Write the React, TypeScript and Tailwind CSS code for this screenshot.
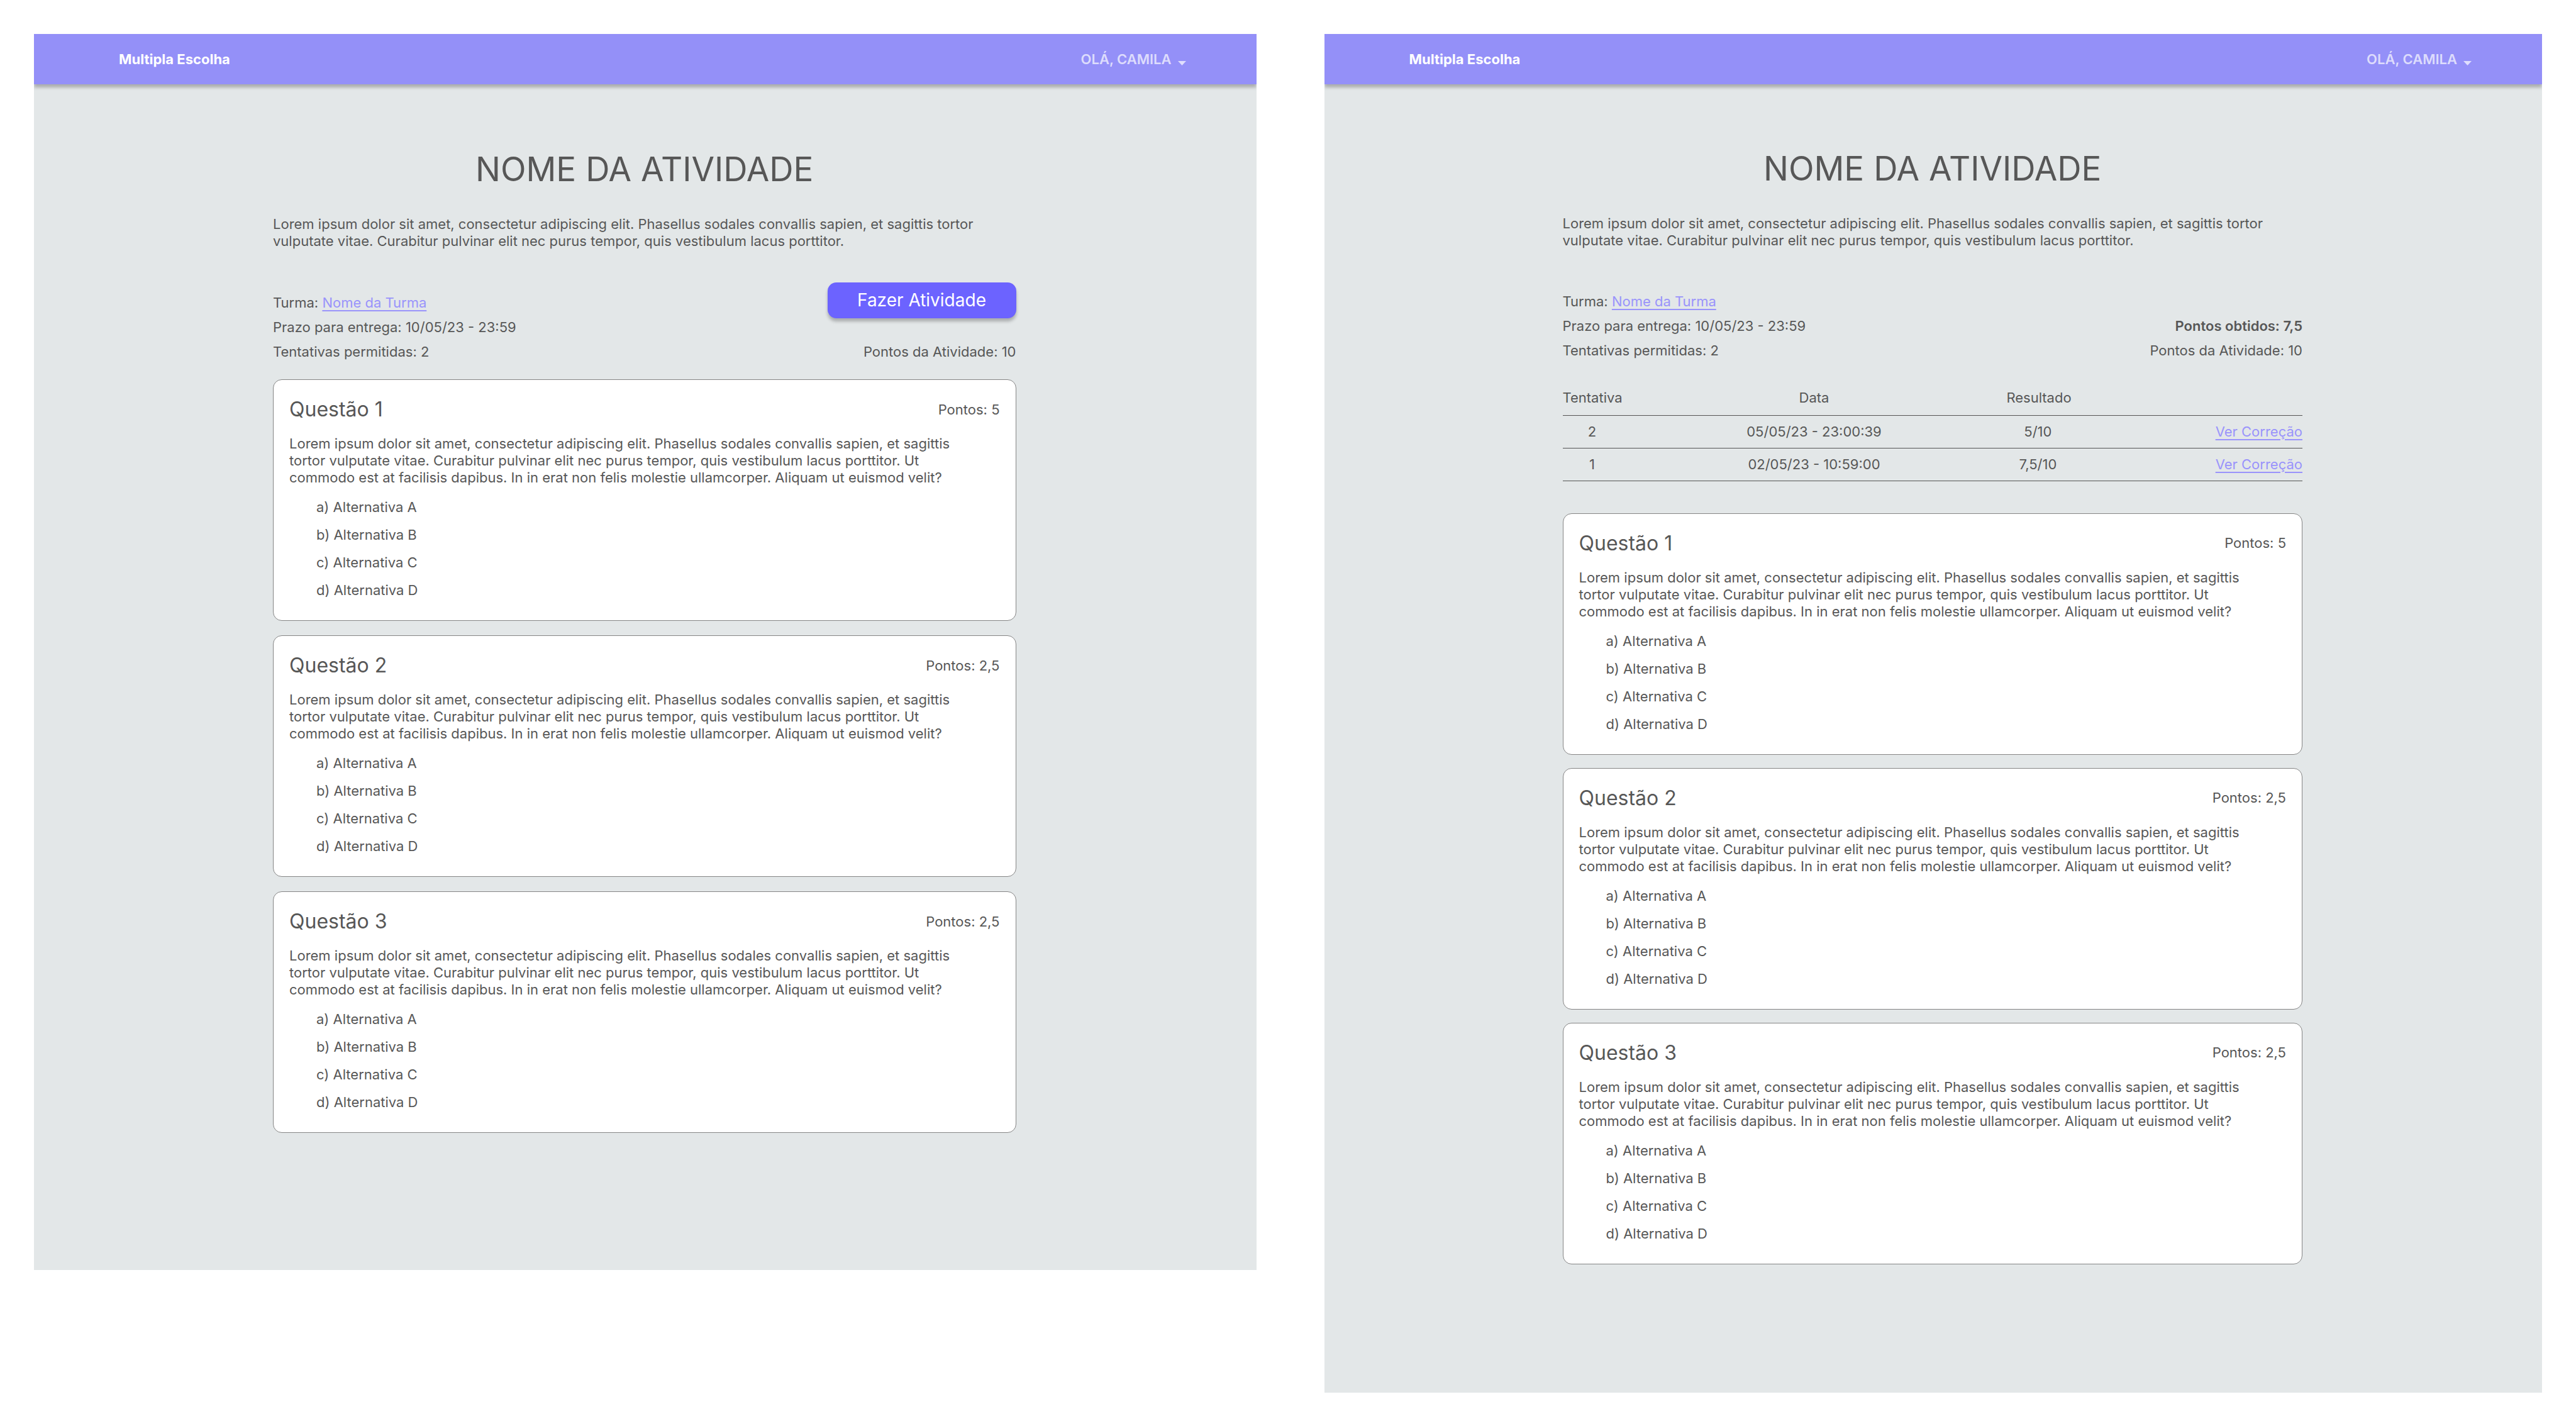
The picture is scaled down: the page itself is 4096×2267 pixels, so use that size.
import type { ReactNode } from "react";

const QUESTION_TEXT =
  "Lorem ipsum dolor sit amet, consectetur adipiscing elit. Phasellus sodales convallis sapien, et sagittis tortor vulputate vitae. Curabitur pulvinar elit nec purus tempor, quis vestibulum lacus porttitor. Ut commodo est at facilisis dapibus. In in erat non felis molestie ullamcorper. Aliquam ut euismod velit?";

const QUESTIONS = [
  { title: "Questão 1", points: "5" },
  { title: "Questão 2", points: "2,5" },
  { title: "Questão 3", points: "2,5" },
];

const OPTIONS = ["a) Alternativa A", "b) Alternativa B", "c) Alternativa C", "d) Alternativa D"];

const ATTEMPTS = [
  { number: "2", date: "05/05/23 - 23:00:39", result: "5/10" },
  { number: "1", date: "02/05/23 - 10:59:00", result: "7,5/10" },
];

function Header() {
  return (
    <header className="relative flex h-20 items-center justify-between bg-[#9490f8] pr-28 pl-[135px] shadow-[0_5px_5px_rgba(0,0,0,0.25)]">
      <span className="font-bold text-white">Multipla Escolha</span>
      <button type="button" className="flex items-center gap-2.5 font-semibold text-white/70">
        OLÁ, CAMILA
        <svg viewBox="0 0 13 7" className="mt-3 h-[7px] w-[13px]" aria-hidden="true">
          <path d="M0 0H13L6.5 7Z" fill="currentColor" />
        </svg>
      </button>
    </header>
  );
}

function Intro() {
  return (
    <>
      <h1 className="text-center text-[53px] leading-[64px]">NOME DA ATIVIDADE</h1>
      <p className="mt-[42px]">
        Lorem ipsum dolor sit amet, consectetur adipiscing elit. Phasellus sodales convallis sapien, et
        sagittis tortor vulputate vitae. Curabitur pulvinar elit nec purus tempor, quis vestibulum lacus
        porttitor.
      </p>
    </>
  );
}

function Details({ children }: { children: ReactNode }) {
  return (
    <div className="flex items-end justify-between">
      <div className="flex flex-col gap-3">
        <p>
          Turma:{" "}
          <a href="#turma" className="text-[#9a94fb] underline underline-offset-4">
            Nome da Turma
          </a>
        </p>
        <p>Prazo para entrega: 10/05/23 - 23:59</p>
        <p>Tentativas permitidas: 2</p>
      </div>
      <div className="flex flex-col items-end">{children}</div>
    </div>
  );
}

function QuestionCard({ title, points }: { title: string; points: string }) {
  return (
    <article className="rounded-[14px] border border-[#858585] bg-white px-[25px] pt-[27px] pb-[34px]">
      <div className="flex items-center justify-between">
        <h2 className="text-[32px] leading-10">{title}</h2>
        <span>Pontos: {points}</span>
      </div>
      <p className="mt-[21px] max-w-[1080px]">{QUESTION_TEXT}</p>
      <ul className="mt-5 flex flex-col gap-[17px] pl-[43px]">
        {OPTIONS.map((option) => (
          <li key={option}>{option}</li>
        ))}
      </ul>
    </article>
  );
}

function AttemptsTable() {
  return (
    <table className="w-full table-fixed border-collapse text-center">
      <colgroup>
        <col className="w-[8%]" />
        <col className="w-[52%]" />
        <col className="w-[100px]" />
        <col />
      </colgroup>
      <thead>
        <tr className="h-[41px] border-b border-[#545454] align-top">
          <th scope="col" className="p-0 text-left font-normal whitespace-nowrap">Tentativa</th>
          <th scope="col" className="p-0 font-normal">Data</th>
          <th scope="col" className="p-0 font-normal whitespace-nowrap">Resultado</th>
          <td className="p-0" />
        </tr>
      </thead>
      <tbody>
        {ATTEMPTS.map((attempt) => (
          <tr key={attempt.number} className="h-[52px] border-b border-[#545454]">
            <td className="p-0">{attempt.number}</td>
            <td className="p-0">{attempt.date}</td>
            <td className="p-0">{attempt.result}</td>
            <td className="p-0 text-right">
              <a href="#correcao" className="text-[#9a94fb] underline underline-offset-4">
                Ver Correção
              </a>
            </td>
          </tr>
        ))}
      </tbody>
    </table>
  );
}

export default function App() {
  return (
    <div className="flex min-h-screen items-start gap-[108px] bg-white p-[54px] font-['Inter','Liberation_Sans',sans-serif] text-[22px] leading-[27px] text-[#575757]">
      <section className="grow-[1943] basis-0 overflow-hidden bg-[#e3e7e8] pb-[218px]">
        <Header />
        <main className="mr-[382px] ml-[380px] pt-[103px]">
          <Intro />
          <div className="mt-[52px]">
            <Details>
              <button
                type="button"
                className="mb-10 h-[57px] w-[300px] rounded-[14px] bg-[#6c63ff] text-[28px] text-white shadow-[0_5px_5px_rgba(0,0,0,0.25)]"
              >
                Fazer Atividade
              </button>
              <p>Pontos da Atividade: 10</p>
            </Details>
          </div>
          <div className="mt-[30px] flex flex-col gap-[23px]">
            {QUESTIONS.map((question) => (
              <QuestionCard key={question.title} {...question} />
            ))}
          </div>
        </main>
      </section>

      <section className="grow-[1936] basis-0 overflow-hidden bg-[#e3e7e8] pb-[204px]">
        <Header />
        <main className="mr-[381px] ml-[379px] pt-[102px]">
          <Intro />
          <div className="mt-[70px]">
            <Details>
              <p className="mb-3 font-semibold">Pontos obtidos: 7,5</p>
              <p>Pontos da Atividade: 10</p>
            </Details>
          </div>
          <div className="mt-12">
            <AttemptsTable />
          </div>
          <div className="mt-[51px] flex flex-col gap-[21px]">
            {QUESTIONS.map((question) => (
              <QuestionCard key={question.title} {...question} />
            ))}
          </div>
        </main>
      </section>
    </div>
  );
}
